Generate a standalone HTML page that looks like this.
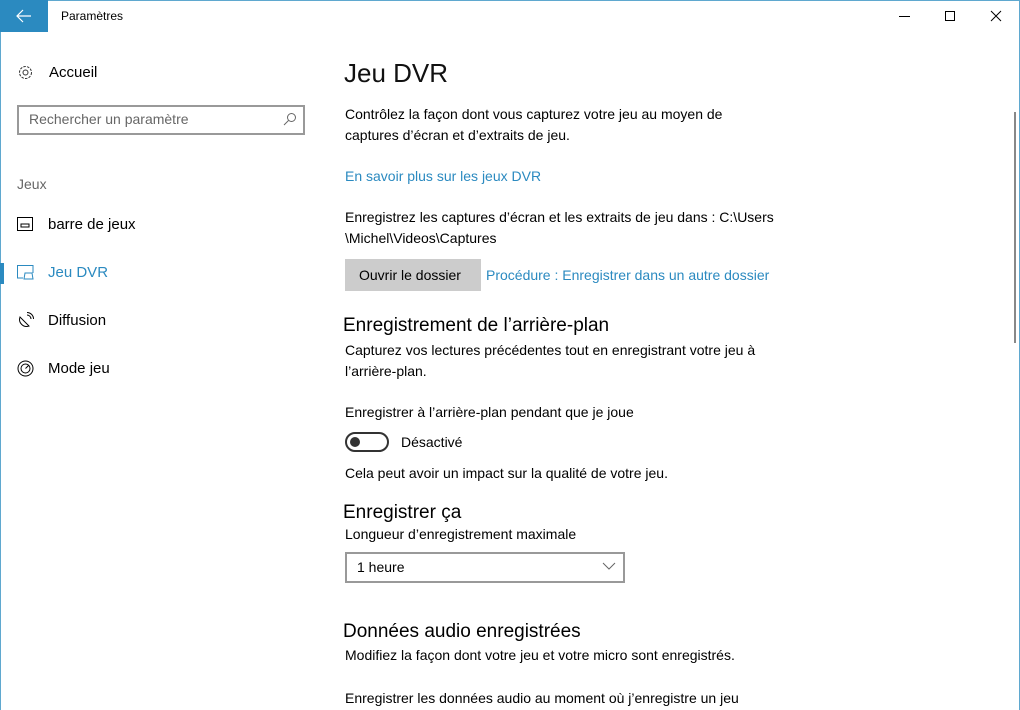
<!DOCTYPE html>
<html><head><meta charset="utf-8"><style>
*{margin:0;padding:0;box-sizing:border-box}
body{width:1020px;height:710px;overflow:hidden;background:#fff;font-family:"Liberation Sans",sans-serif;color:#000;position:relative}
.a{position:absolute;white-space:nowrap}
.t{font-size:14px;color:#000}
.l{color:#2b8ac0}
.h{font-size:19px}
</style></head><body>
<div class="a" style="left:0;top:0;width:1020px;height:1px;background:#5fa8cf"></div>
<div class="a" style="left:0;top:0;width:1px;height:710px;background:#5fa8cf"></div>
<div class="a" style="left:1019px;top:0;width:1px;height:710px;background:#5fa8cf"></div>
<div class="a" style="left:0;top:0;width:48px;height:32px;background:#2b8ac0"></div>
<svg class="a" style="left:16px;top:9px" width="16" height="14"><path d="M1 7H15M7 1L1 7L7 13" stroke="#fff" stroke-width="1.2" fill="none"/></svg>
<div class="a" style="left:61px;top:9px;font-size:12px">Paramètres</div>
<div class="a" style="left:899px;top:16px;width:11px;height:1px;background:#000"></div>
<div class="a" style="left:945px;top:11px;width:10px;height:10px;border:1px solid #000"></div>
<svg class="a" style="left:990px;top:10px" width="12" height="12"><path d="M1 1L11 11M11 1L1 11" stroke="#000" stroke-width="1"/></svg>

<svg class="a" style="left:17px;top:64px" width="17" height="17" viewBox="0 0 17 17"><circle cx="8.5" cy="8.5" r="2.5" fill="none" stroke="#333"/><circle cx="8.5" cy="8.5" r="6" fill="none" stroke="#333" stroke-dasharray="2.5 1.2"/></svg>
<div class="a t" style="left:49px;top:64px;font-size:15px">Accueil</div>
<div class="a" style="left:17px;top:105px;width:288px;height:30px;border:2px solid #999"></div>
<div class="a" style="left:29px;top:111px;font-size:14px;color:#666">Rechercher un paramètre</div>
<svg class="a" style="left:283px;top:112px" width="14" height="14"><circle cx="8.5" cy="5.5" r="4" fill="none" stroke="#666"/><path d="M5.5 8.5L1 13" stroke="#666"/></svg>
<div class="a" style="left:17px;top:176px;font-size:14px;color:#666">Jeux</div>
<svg class="a" style="left:17px;top:217px" width="16" height="14"><rect x="0.5" y="0.5" width="15" height="13" fill="none" stroke="#000"/><rect x="4" y="7" width="8" height="3" fill="none" stroke="#000"/></svg>
<div class="a t" style="left:48px;top:216px;font-size:15px">barre de jeux</div>
<div class="a" style="left:0;top:263px;width:4px;height:21px;background:#2b8ac0"></div>
<svg class="a" style="left:17px;top:265px" width="17" height="15"><path d="M6 13H0.5V0.5H16V8" fill="none" stroke="#2b8ac0"/><path d="M8 8h7l1 6h-9z" fill="none" stroke="#2b8ac0"/></svg>
<div class="a l" style="left:48px;top:264px;font-size:15px">Jeu DVR</div>
<svg class="a" style="left:17px;top:312px" width="17" height="17"><path d="M3 5A7 7 0 0 0 12 14Z" fill="none" stroke="#000"/><path d="M10 3a4 4 0 0 1 4 4M10 0.5a6.5 6.5 0 0 1 6.5 6.5" fill="none" stroke="#000"/></svg>
<div class="a t" style="left:48px;top:312px;font-size:15px">Diffusion</div>
<svg class="a" style="left:17px;top:360px" width="17" height="17"><circle cx="8.5" cy="8.5" r="7.5" fill="none" stroke="#000"/><circle cx="8.5" cy="8.5" r="4.5" fill="none" stroke="#000"/><path d="M8.5 8.5L12 5" stroke="#000"/></svg>
<div class="a t" style="left:48px;top:360px;font-size:15px">Mode jeu</div>

<div class="a" style="left:344px;top:58px;font-size:26px;color:#111">Jeu DVR</div>
<div class="a t" style="left:345px;top:104px;line-height:21px">Contrôlez la façon dont vous capturez votre jeu au moyen de<br>captures d’écran et d’extraits de jeu.</div>
<div class="a t l" style="left:345px;top:168px">En savoir plus sur les jeux DVR</div>
<div class="a t" style="left:345px;top:207px;line-height:21px">Enregistrez les captures d’écran et les extraits de jeu dans : C:\Users<br>\Michel\Videos\Captures</div>
<div class="a" style="left:345px;top:259px;width:136px;height:32px;background:#ccc"></div>
<div class="a t" style="left:359px;top:267px">Ouvrir le dossier</div>
<div class="a t l" style="left:486px;top:267px">Procédure : Enregistrer dans un autre dossier</div>
<div class="a h" style="left:343px;top:315px">Enregistrement de l’arrière-plan</div>
<div class="a t" style="left:345px;top:340px;line-height:21px">Capturez vos lectures précédentes tout en enregistrant votre jeu à<br>l’arrière-plan.</div>
<div class="a t" style="left:345px;top:404px">Enregistrer à l’arrière-plan pendant que je joue</div>
<div class="a" style="left:345px;top:432px;width:44px;height:20px;border:2px solid #333;border-radius:10px"></div>
<div class="a" style="left:350px;top:437px;width:10px;height:10px;border-radius:50%;background:#333"></div>
<div class="a t" style="left:401px;top:434px">Désactivé</div>
<div class="a t" style="left:345px;top:465px">Cela peut avoir un impact sur la qualité de votre jeu.</div>
<div class="a h" style="left:343px;top:502px">Enregistrer ça</div>
<div class="a t" style="left:345px;top:526px">Longueur d’enregistrement maximale</div>
<div class="a" style="left:345px;top:552px;width:280px;height:31px;border:2px solid #999"></div>
<div class="a t" style="left:357px;top:559px">1 heure</div>
<svg class="a" style="left:602px;top:562px" width="14" height="9"><path d="M1 1L7 7L13 1" fill="none" stroke="#666"/></svg>
<div class="a h" style="left:343px;top:621px">Données audio enregistrées</div>
<div class="a t" style="left:345px;top:647px">Modifiez la façon dont votre jeu et votre micro sont enregistrés.</div>
<div class="a t" style="left:345px;top:690px">Enregistrer les données audio au moment où j’enregistre un jeu</div>
<div class="a" style="left:1014px;top:112px;width:2px;height:231px;background:#888"></div>
</body></html>
